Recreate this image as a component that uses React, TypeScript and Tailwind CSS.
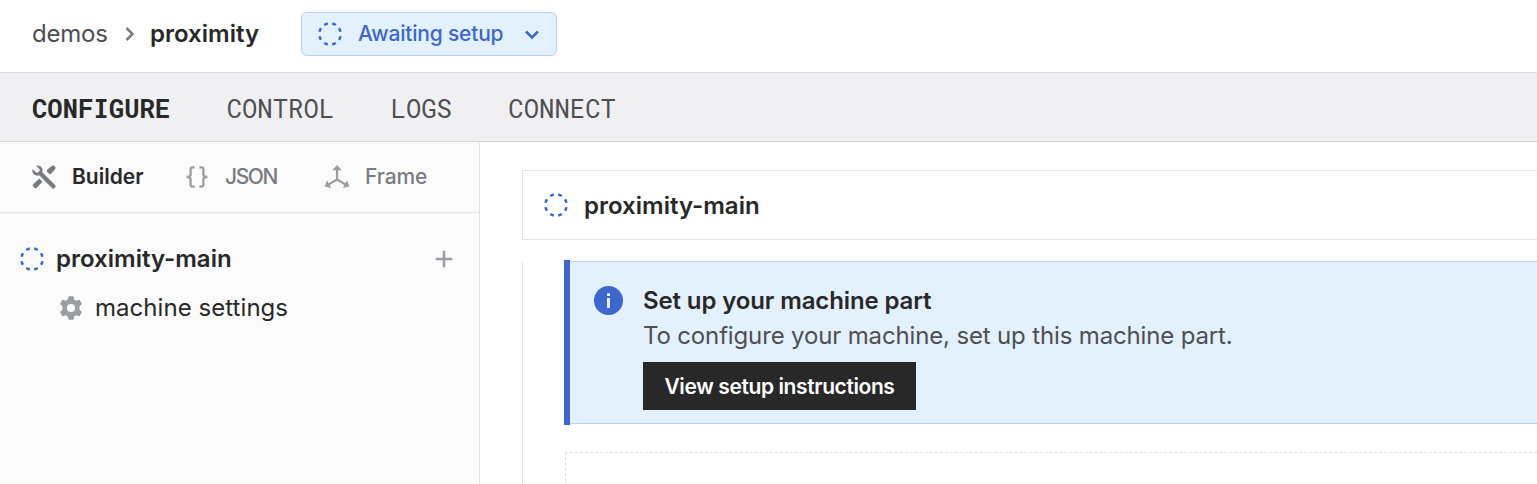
import React from "react";

function Ring({ className = "" }: { className?: string }) {
  return (
    <svg viewBox="0 0 24 24" fill="none" className={`size-6 shrink-0 text-[#3d66cf] ${className}`}>
      <circle cx="12" cy="12" r="10.7" pathLength="80" stroke="currentColor" strokeWidth="2.5" strokeDasharray="4.6 5.4" strokeDashoffset="-2.7" />
    </svg>
  );
}

function Tools() {
  return (
    <svg viewBox="0 0 24 24" className="size-6 shrink-0" fill="#7a7b80">
      <path d="M4.1.7 7.9 4.4 7 7 4.3 7.8.6 4.1C-.4 7.3 1.6 10.2 4.6 10.6c.9.1 1.7 0 2.5-.3L20.3 23.3a1.3 1.3 0 0 0 1.9 0l1.1-1.2a1.3 1.3 0 0 0 0-1.8L10.3 7.2c.8-2.4 0-4.8-2.1-6C6.900.4 5.500.3 4.100.7Z" />
      <path d="M15.300 6.900c-.8-.8-.4-1.700.2-2.300L19 1.600c.8-.7 2.200-1.500 3.100-.9l1.200 1.200c.6.9-.2 2.300-.9 3.100L19.400 8.500c-.6.7-1.500 1-2.300.2L15.300 6.900Z" />
      <path d="m7.300 13.500 3.200 3.200-6 6.200c-.5.6-1.200.6-1.700.1L1 21.200c-.5-.5-.5-1.200 0-1.700l6.300-6Z" />
    </svg>
  );
}

function Braces() {
  return (
    <svg viewBox="0 0 24 24" className="size-6 shrink-0" fill="none" stroke="#9c9da3" strokeWidth="2.3">
      <path d="M9.700 2.300H7.500Q5.600 2.300 5.600 4.200V9.600Q5.600 12 1.600 12Q5.600 12 5.600 14.400V19.800Q5.600 21.700 7.500 21.700H9.700" />
      <path d="M14.300 2.300H16.500Q18.400 2.300 18.400 4.200V9.600Q18.400 12 22.400 12Q18.400 12 18.400 14.400V19.800Q18.400 21.700 16.500 21.700H14.300" />
    </svg>
  );
}

function Axes() {
  return (
    <svg viewBox="0 0 24 24" className="size-6 shrink-0 overflow-visible" fill="#9c9da3">
      <path d="M12 3V14.500M12 14.500 3 19.800M12 14.500 21 19.800" fill="none" stroke="#9c9da3" strokeWidth="2.200" />
      <path d="M12 0 16.800 5.200H7.200ZM-.3 21.400 1.900 15.300 6.200 23ZM24.300 21.400 22.100 15.300 17.800 23Z" />
    </svg>
  );
}

function Gear() {
  return (
    <svg viewBox="0 0 24 24" className="size-6 shrink-0">
      <path
        fill="#9c9da3"
        fillRule="evenodd"
        d="M9.600.3h4.800l.7 3.300c.8.3 1.500.7 2.200 1.200l3.300-1 2.400 4.100-2.500 2.300c.1 1.200.1 2.400 0 3.600l2.500 2.300-2.400 4.100-3.300-1c-.7.5-1.400.9-2.200 1.200l-.7 3.300H9.600l-.7-3.300c-.8-.3-1.500-.7-2.200-1.200l-3.300 1L1 16.100l2.500-2.300c-.1-1.200-.1-2.400 0-3.600L1 7.900l2.400-4.100 3.300 1c.7-.5 1.400-.9 2.200-1.200L9.600.3ZM12 7.900a4.100 4.100 0 1 0 0 8.200 4.100 4.100 0 0 0 0-8.200Z"
      />
    </svg>
  );
}

export default function App() {
  return (
    <div className="flex h-[484px] w-full flex-col overflow-hidden bg-white font-['Inter','Liberation_Sans',sans-serif] text-[24px] leading-[34px] whitespace-nowrap text-[#282829]">
      <header className="flex h-[73px] shrink-0 items-start border-b border-[#d7d7d9] pt-3 pl-8">
        <div className="flex h-11 items-center">
          <span className="w-[92px] tracking-[-0.2px] text-[#4e4f52]">demos</span>
          <svg viewBox="0 0 12 16" className="h-4 w-3" fill="none" stroke="#7a7b80" strokeWidth="2.5">
            <path d="m2.500 2 6 6-6 6" />
          </svg>
          <span className="ml-[14px] w-[151px] font-semibold">proximity</span>
        </div>
        <button className="flex h-11 w-64 items-center rounded-md border border-[#b8d0ef] bg-[#e3f1fd] pl-4 text-[21px] text-[#3d66cf]">
          <Ring />
          <span className="ml-4 w-[166px] text-left font-medium tracking-[-0.200px]">Awaiting setup</span>
          <svg viewBox="0 0 16 16" className="mt-px size-4" fill="none" stroke="currentColor" strokeWidth="2.5">
            <path d="m2 4.500 6 6 6-6" />
          </svg>
        </button>
      </header>

      <nav className="flex h-[69px] shrink-0 items-center gap-[56.400px] border-b border-[#d7d7d9] bg-[#f0f0f3] pt-px pl-8 font-['Roboto_Mono','Liberation_Mono',monospace] text-[25.600px] text-[#4e4f52]">
        <span className="font-bold text-[#282829]">CONFIGURE</span>
        <span>CONTROL</span>
        <span>LOGS</span>
        <span>CONNECT</span>
      </nav>

      <div className="flex min-h-0 flex-1">
        <aside className="w-[480px] shrink-0 border-r border-[#e4e4e6] bg-[#fbfbfc]">
          <div className="flex h-[71px] items-center border-b border-[#e4e4e6] pl-8 text-[21px] text-[#7a7b80]">
            <Tools />
            <span className="ml-4 w-[113px] font-semibold text-[#282829]">Builder</span>
            <Braces />
            <span className="ml-4 w-[100px] font-medium tracking-[-1.400px]">JSON</span>
            <Axes />
            <span className="ml-4 font-medium tracking-[-0.100px]">Frame</span>
          </div>
          <div className="mt-[29px] flex h-[34px] items-center pl-5">
            <Ring />
            <span className="ml-3 flex-1 font-semibold">proximity-main</span>
            <svg viewBox="0 0 18 18" className="mr-[26px] size-[18px]" fill="none" stroke="#9c9da3" strokeWidth="2.600">
              <path d="M9 .7v16.600M.7 9h16.600" />
            </svg>
          </div>
          <div className="mt-[15px] flex h-[34px] items-center pl-[59px]">
            <Gear />
            <span className="ml-3 tracking-[0.050px]">machine settings</span>
          </div>
        </aside>

        <main className="min-w-0 flex-1 pt-7 pl-[42px]">
          <div className="flex h-[70px] items-center border border-r-0 border-[#e4e4e6] pl-[21px]">
            <Ring />
            <span className="ml-4 pt-0.5 font-semibold">proximity-main</span>
          </div>
          <div className="mt-5 flex">
            <div className="mt-[2px] h-[222px] w-px shrink-0 bg-[#e4e4e6]" />
            <div className="min-w-0 flex-1 pl-[41px]">
              <section className="flex h-[165px]">
                <div className="w-1.5 shrink-0 bg-[#3d66cf]" />
                <div className="my-px flex flex-1 border-y border-[#b8d0ef] bg-[#e3f1fd] pt-[23px] pl-6">
                  <svg viewBox="0 0 30 30" className="mt-px size-[30px] shrink-0">
                    <circle cx="14.500" cy="14.500" r="14.500" fill="#3d66cf" />
                    <path d="M13 7.200h3v2.800h-3zM13 12h3v10h-3z" fill="#e3f1fd" />
                  </svg>
                  <div className="-mt-[2px] ml-[19px]">
                    <h2 className="leading-[35px] font-semibold tracking-[-0.120px]">Set up your machine part</h2>
                    <p className="leading-[35px] tracking-[-0.150px] text-[#4e4f52]">To configure your machine, set up this machine part.</p>
                    <button className="mt-[9px] block h-12 w-[273px] bg-[#282828] pt-0.5 text-[21px] font-semibold tracking-[-0.400px] text-white">
                      View setup instructions
                    </button>
                  </div>
                </div>
              </section>
              <div className="mt-[27px] ml-px h-[60px] border border-r-0 border-dashed border-[#e0e0e2]" />
            </div>
          </div>
        </main>
      </div>
    </div>
  );
}
